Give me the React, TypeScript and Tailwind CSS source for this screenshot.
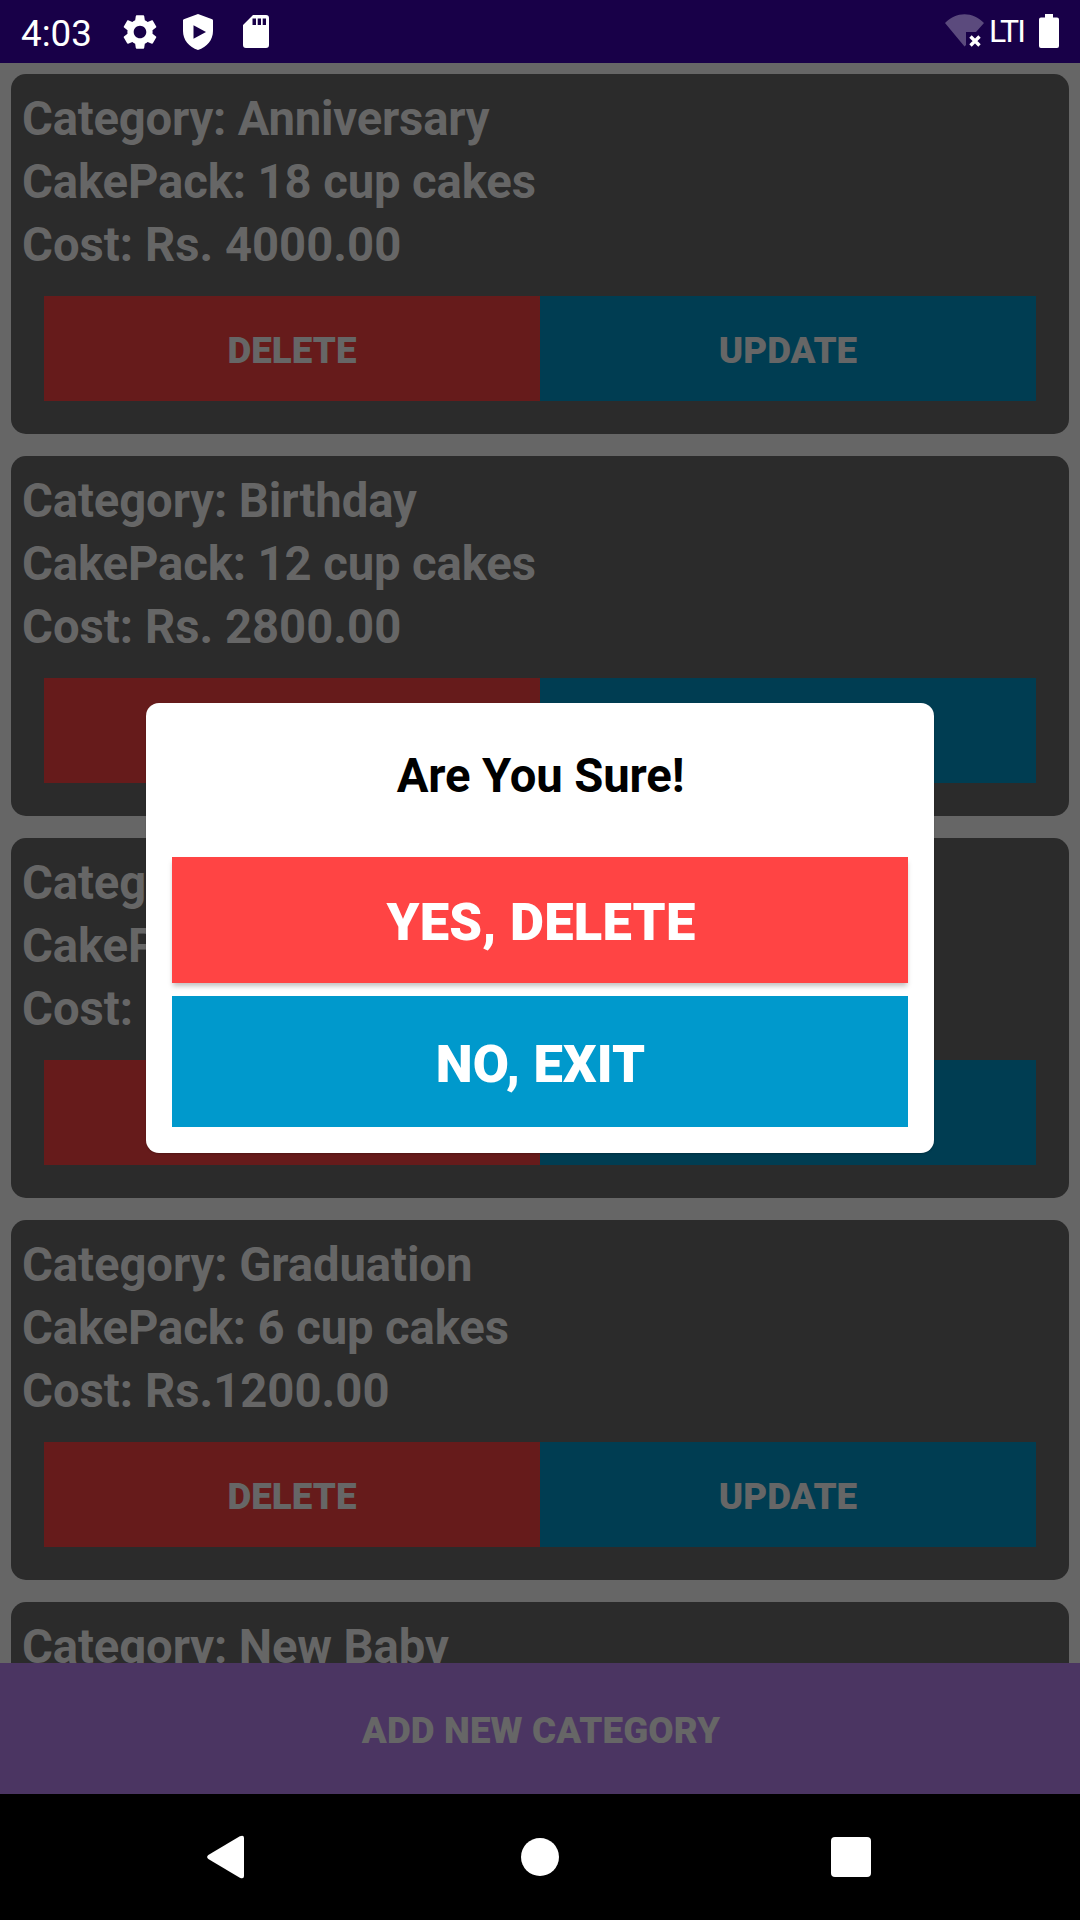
const items = [
  { category: "Anniversary", pack: "18 cup cakes", cost: "Rs. 4000.00", spacing: "tracking-[-0.22px]" },
  { category: "Birthday", pack: "12 cup cakes", cost: "Rs. 2800.00", spacing: "tracking-[-0.12px]" },
  { category: "Farewell", pack: "10 cup cakes", cost: "Rs. 2000.00", spacing: "tracking-[-0.12px]" },
  { category: "Graduation", pack: "6 cup cakes", cost: "Rs.1200.00", spacing: "tracking-[-0.08px]" },
  { category: "New Baby", pack: "6 cup cakes", cost: "Rs. 1500.00", spacing: "tracking-[-0.12px]" },
];

function StatusBar() {
  return (
    <header className="flex h-[63px] shrink-0 items-start bg-[#180048] text-white">
      <span className="ml-[21px] mt-3 w-[76px] shrink-0 text-[36.75px] leading-[43px]">4:03</span>
      <svg className="ml-[22px] mt-[11px] size-[42px]" viewBox="0 0 24 24" fill="currentColor">
        <path d="M19.14 12.94c.04-.3.06-.61.06-.94 0-.32-.02-.64-.07-.94l2.03-1.58c.18-.14.23-.41.12-.61l-1.92-3.32c-.12-.22-.37-.29-.59-.22l-2.39.96c-.5-.38-1.03-.7-1.62-.94l-.36-2.54c-.04-.24-.24-.41-.48-.41h-3.84c-.24 0-.43.17-.47.41l-.36 2.54c-.59.24-1.13.57-1.62.94l-2.39-.96c-.22-.08-.47 0-.59.22L2.74 8.87c-.12.21-.08.47.12.61l2.03 1.58c-.05.3-.09.63-.09.94s.02.64.07.94l-2.03 1.58c-.18.14-.23.41-.12.61l1.92 3.32c.12.22.37.29.59.22l2.39-.96c.5.38 1.03.7 1.62.94l.36 2.54c.05.24.24.41.48.41h3.84c.24 0 .44-.17.47-.41l.36-2.54c.59-.24 1.13-.56 1.62-.94l2.39.96c.22.08.47 0 .59-.22l1.92-3.32c.12-.22.07-.47-.12-.61l-2.01-1.58zM12 15.6c-1.98 0-3.6-1.62-3.6-3.6s1.62-3.6 3.6-3.6 3.6 1.62 3.6 3.6-1.62 3.6-3.6 3.6z" />
      </svg>
      <svg className="ml-[22px] mt-[14px] h-9 w-[30px]" viewBox="0 0 30 36" fill="currentColor">
        <path fillRule="evenodd" d="M15 0 .8 5.300Q0 5.600 0 6.500V17C0 26 6 33 15 36 24 33 30 26 30 17V6.500q0-.9-.8-1.200zM10.500 11.200 23 18l-12.500 6.800z" />
      </svg>
      <svg className="ml-[30px] mt-[15px] h-[33px] w-[26px]" viewBox="0 0 26 33" fill="currentColor">
        <path fillRule="evenodd" d="M10 0h13q3 0 3 3v27q0 3-3 3H3q-3 0-3-3V10zM9.500 3.500V10H13V3.500zM14.700 3.500V10H18V3.500zM19.700 3.500V10H23V3.500z" />
      </svg>
      <div className="flex-1" />
      <svg className="mt-[14px] h-[33px] w-10" viewBox="0 0 40 33">
        <path d="M0 9C11-2.800 28-2.800 39 9L31 18H21V31L19.500 32.500z" fill="#5b4a7d" />
        <path d="m25.500 22.500 9 9m0-9-9 9" stroke="#fff" strokeWidth="3.400" />
      </svg>
      <span className="ml-1 mt-3 w-9 shrink-0 text-[32px] leading-[38px] tracking-[-1.9px]">LTI</span>
      <svg className="ml-[14px] mr-[21px] mt-[14px] h-[34px] w-5" viewBox="0 0 20 34" fill="currentColor">
        <path d="M6 0h8v3.500h4q2 0 2 2V32q0 2-2 2H2q-2 0-2-2V5.500q0-2 2-2h4z" />
      </svg>
    </header>
  );
}

type CardProps = { category: string; pack: string; cost: string; spacing: string };

function Card({ category, pack, cost, spacing }: CardProps) {
  return (
    <article className="flex h-[360px] shrink-0 flex-col rounded-[15px] bg-[#2b2b2b] pt-[14px] font-bold text-[#666666]">
      <div className="px-[11px] text-[47.25px] leading-[63px]">
        <p className={spacing}>Category: {category}</p>
        <p className="tracking-[-0.13px]">CakePack: {pack}</p>
        <p>Cost: {cost}</p>
      </div>
      <div className="mx-[33px] mt-[19px] grid h-[105px] grid-cols-2 text-[36.75px] font-black">
        <button className="bg-[#661b1b] pt-1">DELETE</button>
        <button className="bg-[#003d52] pt-1">UPDATE</button>
      </div>
    </article>
  );
}

function ConfirmDialog() {
  return (
    <div
      role="dialog"
      className="absolute left-[146px] top-[703px] flex h-[450px] w-[788px] flex-col rounded-[13px] bg-white px-[26px] shadow-[0_1px_2px_rgba(0,0,0,0.2)]"
    >
      <h2 className="h-[154px] pl-px pt-[42px] text-center text-[47.25px] font-bold leading-[63px] tracking-[-0.12px] text-black">
        Are You Sure!
      </h2>
      <button className="h-[126px] bg-[#ff4444] pl-0.5 pt-1 text-[52.5px] font-black tracking-[0.22px] text-white shadow-[0_4px_5px_-1px_rgba(0,0,0,0.25)]">
        YES, DELETE
      </button>
      <button className="mt-[13px] h-[131px] bg-[#0099cc] pl-px pt-[5px] text-[52.5px] font-black tracking-[0.16px] text-white">
        NO, EXIT
      </button>
    </div>
  );
}

function NavigationBar() {
  return (
    <nav className="flex h-[126px] shrink-0 items-center bg-black pl-[206px] text-white">
      <svg className="h-11 w-10" viewBox="0 0 40 44" fill="currentColor">
        <path d="M2.300 20 33.800 1.300Q38 -.5 38 3V41Q38 44.500 33.800 42.700L2.300 24Q0 22 2.300 20z" />
      </svg>
      <div className="ml-[275px] size-[38px] rounded-full bg-white" />
      <div className="ml-[272px] size-10 rounded-[4px] bg-white" />
    </nav>
  );
}

export default function App() {
  return (
    <div className="relative flex h-[1920px] w-[1080px] flex-col overflow-hidden bg-[#666666] font-['Roboto',sans-serif]">
      <StatusBar />
      <main className="flex h-[1600px] flex-col gap-[22px] overflow-hidden px-[11px] pt-[11px]">
        {items.map((item) => (
          <Card key={item.category} {...item} />
        ))}
      </main>
      <button className="h-[131px] shrink-0 bg-[#4b3562] pl-0.5 pt-1 text-[36.75px] font-black tracking-[0.12px] text-[#666666]">
        ADD NEW CATEGORY
      </button>
      <NavigationBar />
      <ConfirmDialog />
    </div>
  );
}
